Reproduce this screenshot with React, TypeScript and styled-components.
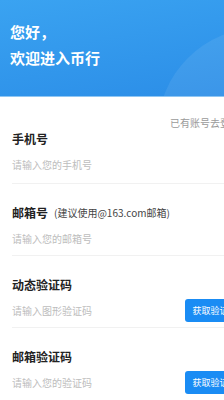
import React from "react";
import styled, { createGlobalStyle } from "styled-components";

const GlobalStyle = createGlobalStyle`
  html, body {
    margin: 0;
    padding: 0;
    background: #ffffff;
    font-family: "Noto Sans CJK SC", "Noto Sans", sans-serif;
  }
`;

const Viewport = styled.div`
  width: 224px;
  height: 400px;
  overflow: hidden;
  background: #ffffff;
`;

const Page = styled.div`
  width: 250px;
`;

const Header = styled.header`
  position: relative;
  height: 97px;
  box-sizing: border-box;
  padding: 19px 10px 0 10px;
  overflow: hidden;
  background: linear-gradient(170deg, #3aa3f1 0%, #2b8de7 100%);
  border-bottom: 1px solid #8fc6f3;

  &::after {
    content: "";
    position: absolute;
    left: 158px;
    top: 28px;
    width: 204px;
    height: 204px;
    border-radius: 50%;
    background: rgba(255, 255, 255, 0.08);
  }
`;

const Greeting = styled.div`
  position: relative;
  z-index: 1;
  color: #ffffff;
  font-size: 15px;
  font-weight: 700;
  line-height: 26px;
`;

const LoginLink = styled.div`
  margin-top: 19px;
  padding-right: 10px;
  text-align: right;
  font-size: 10px;
  line-height: 14px;
  color: #9a9a9a;
  white-space: nowrap;
`;

const Field = styled.section<{ $first?: boolean }>`
  margin-left: 12px;
  padding: ${({ $first }) => ($first ? "1px 0 7px 0" : "21px 0 5px 0")};
  border-bottom: 1px solid #f1f1f1;
  display: flex;
  flex-direction: column;
  gap: ${({ $first }) => ($first ? "5px" : "5px")};

  &:last-child {
    border-bottom: none;
  }
`;

const LabelRow = styled.div`
  display: flex;
  align-items: center;
  gap: 6px;
  height: 16px;
`;

const Label = styled.span`
  font-size: 12px;
  font-weight: 700;
  color: #222222;
  line-height: 16px;
`;

const Hint = styled.span`
  font-size: 10px;
  color: #444444;
  line-height: 16px;
`;

const InputRow = styled.div`
  display: flex;
  align-items: center;
  height: 24px;
`;

const Input = styled.input`
  flex: 1;
  min-width: 0;
  border: none;
  outline: none;
  padding: 0;
  background: transparent;
  font-family: inherit;
  font-size: 10px;
  color: #333333;

  &::placeholder {
    color: #bdbdbd;
  }
`;

const CodeButton = styled.button`
  flex: none;
  width: 60px;
  height: 23px;
  margin-right: 5px;
  border: none;
  border-radius: 3px;
  background: #1a8cf4;
  color: #ffffff;
  font-family: inherit;
  font-size: 9px;
  padding: 0;
  white-space: nowrap;
`;

const fields = [
  { label: "手机号", placeholder: "请输入您的手机号" },
  { label: "邮箱号", hint: "(建议使用@163.com邮箱)", placeholder: "请输入您的邮箱号" },
  { label: "动态验证码", placeholder: "请输入图形验证码", button: true },
  { label: "邮箱验证码", placeholder: "请输入您的验证码", button: true },
];

const App: React.FC = () => {
  return (
    <Viewport>
      <GlobalStyle />
      <Page>
        <Header>
          <Greeting>您好，</Greeting>
          <Greeting>欢迎进入币行</Greeting>
        </Header>
        <LoginLink>已有账号去登录</LoginLink>
        {fields.map((f, i) => (
          <Field key={f.label} $first={i === 0}>
            <LabelRow>
              <Label>{f.label}</Label>
              {f.hint && <Hint>{f.hint}</Hint>}
            </LabelRow>
            <InputRow>
              <Input placeholder={f.placeholder} />
              {f.button && <CodeButton>获取验证码</CodeButton>}
            </InputRow>
          </Field>
        ))}
      </Page>
    </Viewport>
  );
};

export default App;
